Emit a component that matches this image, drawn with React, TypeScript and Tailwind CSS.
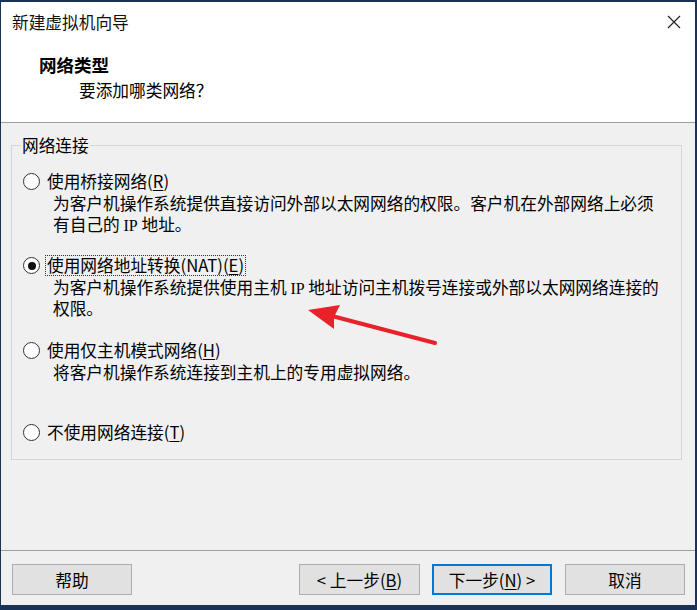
import type { ReactNode } from 'react';

const font = { fontFamily: '"Noto Sans CJK SC", "Microsoft YaHei", "Noto Sans", sans-serif' };

function U({ children }: { children: ReactNode }) {
  return <span className="underline underline-offset-2 decoration-1">{children}</span>;
}

function IP() {
  return <span className="font-['Liberation_Serif',serif] text-[16px] leading-none">IP</span>;
}

function Radio({ checked }: { checked?: boolean }) {
  return (
    <span className="flex size-[17px] shrink-0 items-center justify-center rounded-full border border-[#333] bg-white">
      {checked && <span className="size-[8px] rounded-full bg-[#111]" />}
    </span>
  );
}

function Option({
  label,
  checked,
  focused,
  lines,
  className,
}: {
  label: ReactNode;
  checked?: boolean;
  focused?: boolean;
  lines?: ReactNode[];
  className?: string;
}) {
  return (
    <div className={className}>
      <div className="flex items-center gap-[5px]">
        <Radio checked={checked} />
        <span
          className={
            'border px-[1px] leading-[19px] whitespace-nowrap ' +
            (focused ? 'border-dotted border-[#333]' : 'border-transparent')
          }
        >
          {label}
        </span>
      </div>
      {lines?.map((l, i) => (
        <p key={i} className={'ml-[30px] h-[21px] leading-[21px] whitespace-nowrap ' + (i === 0 ? 'mt-[1px]' : '')}>
          {l}
        </p>
      ))}
    </div>
  );
}

function Button({ children, primary, className }: { children: ReactNode; primary?: boolean; className?: string }) {
  return (
    <button
      className={
        'flex h-[31px] items-center justify-center bg-[#e1e1e1] text-[16.7px] leading-[20px] text-black ' +
        (primary ? 'border-2 border-[#0078d7] ' : 'border border-[#adadad] ') +
        (className ?? '')
      }
    >
      {children}
    </button>
  );
}

export default function App() {
  return (
    <div className="relative h-[610px] w-[697px] bg-[#1b3257] pt-[2px] pb-[5px] pl-[1px] pr-[2px]" style={font}>
      <div className="flex h-full flex-col bg-[#f0f0f0] text-[16.7px] text-black">
        {/* Header */}
        <div className="h-[121px] shrink-0 border-b border-[#a0a0a0] bg-white">
          <div className="mt-[10px] flex h-[20px] items-center justify-between pl-[11px] pr-[14px]">
            <span className="leading-[20px] text-[#111]">新建虚拟机向导</span>
            <svg width="14" height="14" viewBox="0 0 14 14" className="text-[#222]">
              <path d="M1 1 L13 13 M13 1 L1 13" stroke="currentColor" strokeWidth="1.2" fill="none" />
            </svg>
          </div>
          <p className="mt-[23px] pl-[38px] text-[17.5px] leading-[20px] font-bold">网络类型</p>
          <p className="mt-[5px] pl-[78px] leading-[20px]">要添加哪类网络？</p>
        </div>

        {/* Group box */}
        <div className="relative mt-[22px] mr-[13px] ml-[10px] h-[315px] border border-[#d5d5d5] pt-[25px] pl-[11px]">
          <span className="absolute -top-[11px] left-[9px] bg-[#f0f0f0] px-[1px] leading-[20px]">网络连接</span>

          <Option
            label={<>使用桥接网络(<U>R</U>)</>}
            lines={[
              '为客户机操作系统提供直接访问外部以太网网络的权限。客户机在外部网络上必须',
              <>有自己的 <IP /> 地址。</>,
            ]}
          />
          <Option
            className="mt-[20px]"
            checked
            focused
            label={<>使用网络地址转换(NAT)(<U>E</U>)</>}
            lines={[
              <>为客户机操作系统提供使用主机 <IP /> 地址访问主机拨号连接或外部以太网网络连接的</>,
              '权限。',
            ]}
          />
          <Option
            className="mt-[21px]"
            label={<>使用仅主机模式网络(<U>H</U>)</>}
            lines={['将客户机操作系统连接到主机上的专用虚拟网络。']}
          />
          <Option className="mt-[39px]" label={<>不使用网络连接(<U>T</U>)</>} />
        </div>

        <div className="flex-1" />

        {/* Footer */}
        <div className="flex h-[55px] shrink-0 items-start border-t border-[#a0a0a0] pt-[13px]">
          <Button className="ml-[11px] w-[120px]">帮助</Button>
          <div className="flex-1" />
          <Button className="w-[121px]">&lt; 上一步(<U>B</U>)</Button>
          <Button primary className="ml-[12px] w-[120px]">下一步(<U>N</U>) &gt;</Button>
          <Button className="mr-[10px] ml-[13px] w-[120px]">取消</Button>
        </div>
      </div>

      {/* Red annotation arrow */}
      <svg className="pointer-events-none absolute top-0 left-0" width="697" height="610" viewBox="0 0 697 610">
        <line x1="435" y1="343" x2="332" y2="316" stroke="#e8212a" strokeWidth="4" strokeLinecap="round" />
        <path d="M308 310 L340 305 L334 317 L334 329 Z" fill="#e8212a" />
      </svg>
    </div>
  );
}
